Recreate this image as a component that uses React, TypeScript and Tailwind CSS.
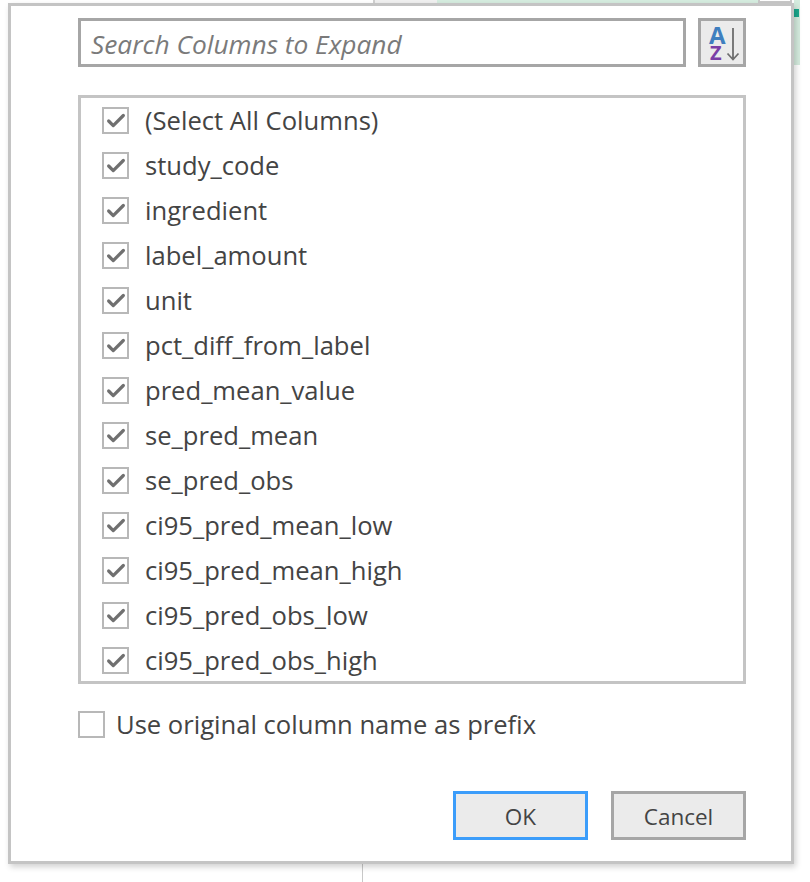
import { Check } from 'lucide-react'

const columns = [
  '(Select All Columns)',
  'study_code',
  'ingredient',
  'label_amount',
  'unit',
  'pct_diff_from_label',
  'pred_mean_value',
  'se_pred_mean',
  'se_pred_obs',
  'ci95_pred_mean_low',
  'ci95_pred_mean_high',
  'ci95_pred_obs_low',
  'ci95_pred_obs_high',
]

function SortIcon() {
  return (
    <svg width="42" height="43" viewBox="0 0 42 43" fill="none">
      <text x="8" y="23" fontFamily="'Open Sans', sans-serif" fontWeight="700" fontSize="24" fill="#3f7fbf">A</text>
      <text x="9" y="39" fontFamily="'Open Sans', sans-serif" fontWeight="700" fontSize="20" fill="#7b3fa6">Z</text>
      <path d="M32 7V38M26.5 32.5L32 38.5L37.5 32.5" stroke="#6e6e6e" strokeWidth="1.8" />
    </svg>
  )
}

function ColumnRow({ name }: { name: string }) {
  return (
    <div className="flex h-[45px] items-center">
      <div className="flex h-[27px] w-[27px] items-center justify-center border-2 border-[#b8b8b8] bg-white">
        <Check className="h-[22px] w-[22px] text-[#707070]" strokeWidth={3.5} />
      </div>
      <span className="ml-[16px] text-[#444444]">{name}</span>
    </div>
  )
}

export default function App() {
  return (
    <div className="relative h-[882px] w-[810px] overflow-hidden bg-white font-['Open_Sans',sans-serif] text-[25.6px] leading-none">
      {/* window behind the dialog */}
      <div className="absolute left-[373px] top-0 h-[4px] w-[2px] bg-[#d0d0d0]" />
      <div className="absolute left-[375px] top-0 h-[4px] w-[62px] bg-[#f0f0f0]" />
      <div className="absolute left-[437px] top-0 h-[4px] w-[321px] bg-[#d5ecdf]" />
      <div className="absolute left-[758px] top-0 h-[3px] w-[34px] border-b-2 border-l-2 border-r-2 border-[#c8c8c8] bg-white" />
      <div className="absolute left-[794px] top-0 h-[65px] w-[6px] bg-[#d5ecdf]" />
      <div className="absolute left-[794px] top-[9px] h-[8px] w-[5px] bg-[#1aa88c]" />
      <div className="absolute left-[362px] top-[860px] h-[22px] w-px bg-[#c8c8c8]" />

      <div className="relative ml-[8px] mt-[3px] h-[861px] w-[786px] border-[3px] border-[#c4c4c4] bg-white shadow-[2px_3px_6px_rgba(0,0,0,0.18)]">
        <div className="pl-[67px] pr-[45px] pt-[12px]">
          <div className="flex gap-[12px]">
            <div className="flex h-[49px] min-w-0 flex-1 items-center border-[3px] border-[#a6a6a6] pl-[10px] pt-[4px] text-[26.3px] italic text-[#7a7a7a]">
              Search Columns to Expand
            </div>
            <div className="flex h-[49px] w-[48px] shrink-0 items-center justify-center border-[3px] border-[#a6a6a6] bg-[#ebebeb]">
              <SortIcon />
            </div>
          </div>

          <div className="mt-[28px] h-[589px] overflow-hidden border-[3px] border-[#c4c4c4] pl-[21px]">
            {columns.map((name) => (
              <ColumnRow key={name} name={name} />
            ))}
          </div>

          <div className="mt-[27px] flex items-center">
            <div className="h-[27px] w-[27px] border-2 border-[#b8b8b8] bg-white" />
            <span className="ml-[11px] text-[#444444]">Use original column name as prefix</span>
          </div>

          <div className="mt-[53px] flex justify-end gap-[23px]">
            <button className="h-[49px] w-[135px] border-[3px] border-[#3c9dfa] bg-[#ebebeb] pt-[3px] text-[22.5px] text-[#444444]">OK</button>
            <button className="h-[49px] w-[135px] border-[3px] border-[#a6a6a6] bg-[#ebebeb] pt-[3px] text-[22.5px] text-[#444444]">Cancel</button>
          </div>
        </div>
      </div>
    </div>
  )
}
